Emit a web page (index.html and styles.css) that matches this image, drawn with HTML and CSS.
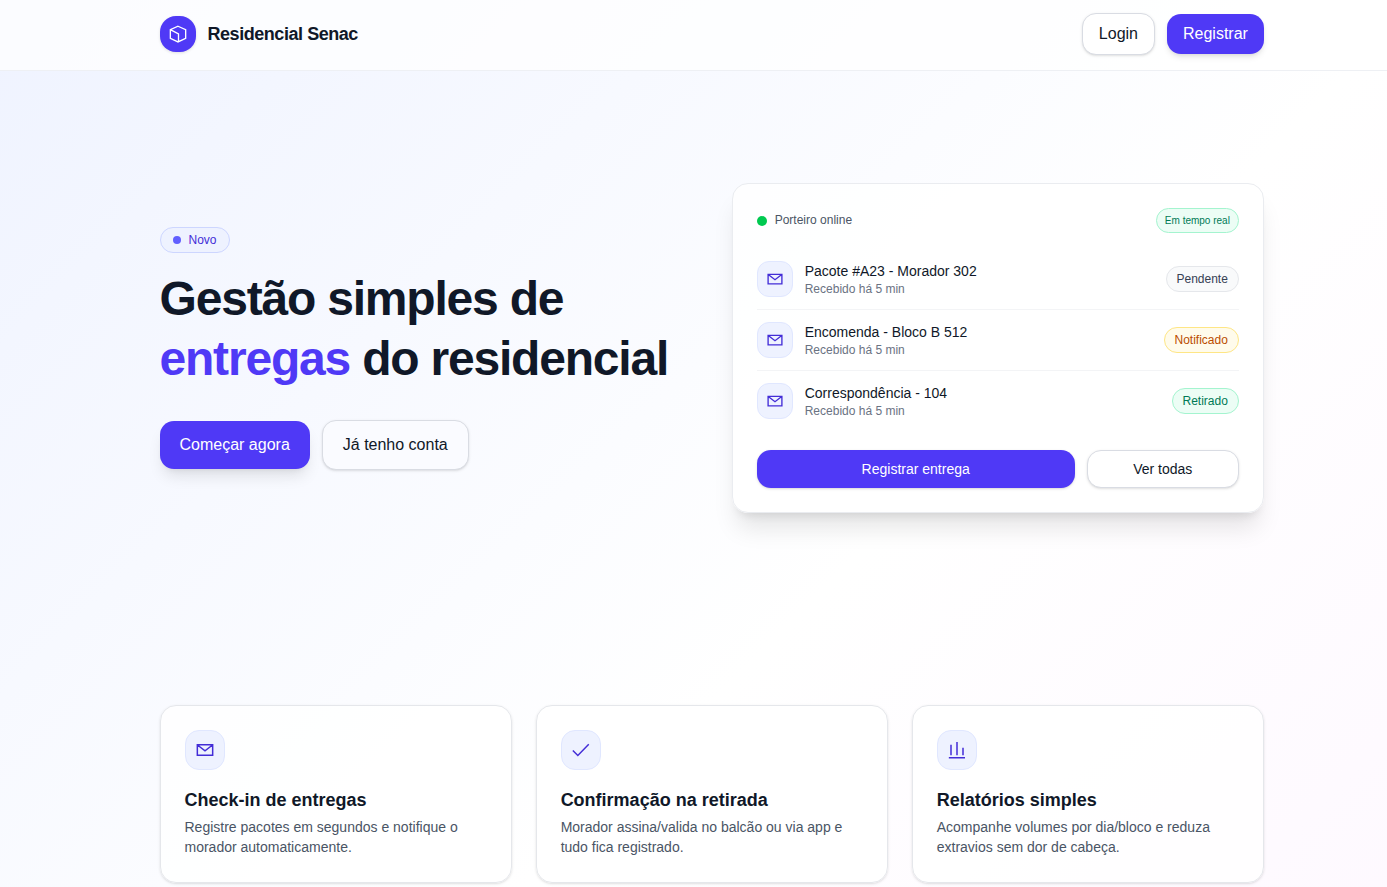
FILE: index.html
```html
<!DOCTYPE html>
<html lang="pt-BR">
<head>
<meta charset="utf-8">
<title>Residencial Senac</title>
<link rel="stylesheet" href="styles.css">
</head>
<body>
<svg width="0" height="0" class="symbols">
  <symbol id="mail" viewBox="0 0 24 24"><path d="M2.8 5.8h18.4v12.6H2.8z M3 6l9 7 9-7"/></symbol>
</svg>
<div class="page">
  <header class="header">
    <div class="container bar">
      <div class="brand">
        <span class="logo"><svg class="icon" viewBox="0 0 24 24"><path d="M12 2.7l9.2 4v10.6L12 21.5l-9.2-4.2V6.7z M2.8 6.7L12.6 11.8v9.6"/></svg></span>
        <span class="name">Residencial Senac</span>
      </div>
      <nav class="nav">
        <a class="btn outline">Login</a>
        <a class="btn primary">Registrar</a>
      </nav>
    </div>
  </header>
  <main>
    <section class="container hero">
      <div class="intro">
        <span class="pill new"><i class="dot"></i>Novo</span>
        <h1>Gestão simples de <span class="accent">entregas</span> do residencial</h1>
        <div class="actions">
          <a class="btn primary large">Começar agora</a>
          <a class="btn outline large clear">Já tenho conta</a>
        </div>
      </div>
      <div class="panel">
        <div class="status">
          <span class="online"><i class="dot"></i>Porteiro online</span>
          <span class="pill green live">Em tempo real</span>
        </div>
        <ul class="list">
          <li><span class="tile"><svg class="icon" viewBox="0 0 24 24"><use href="#mail"/></svg></span>
            <div class="item"><p class="title">Pacote #A23 - Morador 302</p><p class="time">Recebido há 5 min</p></div>
            <span class="pill gray">Pendente</span></li>
          <li><span class="tile"><svg class="icon" viewBox="0 0 24 24"><use href="#mail"/></svg></span>
            <div class="item"><p class="title">Encomenda - Bloco B 512</p><p class="time">Recebido há 5 min</p></div>
            <span class="pill amber">Notificado</span></li>
          <li><span class="tile"><svg class="icon" viewBox="0 0 24 24"><use href="#mail"/></svg></span>
            <div class="item"><p class="title">Correspondência - 104</p><p class="time">Recebido há 5 min</p></div>
            <span class="pill green">Retirado</span></li>
        </ul>
        <div class="panel-actions">
          <a class="btn primary small">Registrar entrega</a>
          <a class="btn outline small">Ver todas</a>
        </div>
      </div>
    </section>
    <section class="container features">
      <article class="card">
        <span class="tile big"><svg class="icon" viewBox="0 0 24 24"><use href="#mail"/></svg></span>
        <h3>Check-in de entregas</h3>
        <p>Registre pacotes em segundos e notifique o morador automaticamente.</p>
      </article>
      <article class="card">
        <span class="tile big"><svg class="icon" viewBox="0 0 24 24"><path d="M2.2 12.5l6 6L21.3 5.2"/></svg></span>
        <h3>Confirmação na retirada</h3>
        <p>Morador assina/valida no balcão ou via app e tudo fica registrado.</p>
      </article>
      <article class="card">
        <span class="tile big"><svg class="icon" viewBox="0 0 24 24"><path d="M2.2 21.3h19.4 M4.8 18.2V5.6 M12 18.2V2.4 M19.2 18.2V9.2"/></svg></span>
        <h3>Relatórios simples</h3>
        <p>Acompanhe volumes por dia/bloco e reduza extravios sem dor de cabeça.</p>
      </article>
    </section>
  </main>
</div>
</body>
</html>
```
FILE: styles.css
```css
* { box-sizing: border-box; margin: 0; padding: 0; }
html { overflow: hidden; }
body { font-family: "Liberation Sans", Arial, sans-serif; color: #101828; overflow: hidden; height: 887px; }
.symbols { display: block; height: 0; }
.page { width: 1423.4px; height: 887px; overflow: hidden; background: linear-gradient(to bottom right, #eff3ff, #fff 50%, #fdf5ff) 0 0 / 1424px 1400px no-repeat; }
.container { width: 1104.4px; margin: 0 auto; }
.header { height: 71px; background: rgba(255,255,255,.75); border-bottom: 1px solid #eef0f4; }
.bar { height: 68px; display: flex; justify-content: space-between; align-items: center; }
.brand, .nav, .actions { display: flex; align-items: center; gap: 12px; }
.logo { width: 36px; height: 36px; border-radius: 16px; background: #4f39f6; color: #fff; display: grid; place-items: center; box-shadow: 0 1px 3px rgba(0,0,0,.12); }
.icon { width: 20px; height: 20px; fill: none; stroke: currentColor; stroke-width: 1.6; }
.name { font-size: 18px; font-weight: 700; letter-spacing: -.45px; }
.btn { display: block; padding: 8px 16px; border-radius: 14px; font-size: 16px; line-height: 24px; text-align: center; white-space: nowrap; }
.primary { background: #4f39f6; color: #fff; box-shadow: 0 1px 3px rgba(0,0,0,.12), 0 1px 2px -1px rgba(0,0,0,.12); }
.outline { background: #fff; border: 1px solid #d9dce3; box-shadow: 0 1px 3px rgba(0,0,0,.1), 0 1px 2px -1px rgba(0,0,0,.1); }
.nav .primary { box-shadow: 0 4px 6px -1px rgba(0,0,0,.1), 0 2px 4px -2px rgba(0,0,0,.1); }
.large { padding: 12px 20px; }
.actions .primary { box-shadow: 0 10px 15px -3px rgba(0,0,0,.1), 0 4px 6px -4px rgba(0,0,0,.1); }
.clear { background: #fafbff; }
.hero { padding-top: 112px; height: 634px; display: grid; grid-template-columns: 1fr 1fr; gap: 40px; align-items: start; }
.intro { padding-top: 43.5px; }
.pill { display: inline-flex; align-items: center; border: 1px solid; border-radius: 20px; font-size: 12px; line-height: 16px; padding: 4px 10px; white-space: nowrap; }
.new { gap: 8px; padding: 4px 12px; color: #432dd7; background: #eef2ff; border-color: #cdd6ff; }
.dot { width: 8px; height: 8px; border-radius: 50%; background: #615fff; }
h1 { margin-top: 16px; font-size: 48px; line-height: 60px; letter-spacing: -1.2px; }
.accent { color: #4f39f6; }
.actions { margin-top: 31.5px; }
.panel { border: 1px solid #eaecf0; border-radius: 16px; padding: 24px; height: 330px; background: rgba(255,255,255,.8); box-shadow: 0 20px 25px -5px rgba(0,0,0,.1), 0 8px 10px -6px rgba(0,0,0,.1); }
.status { display: flex; justify-content: space-between; align-items: center; height: 25px; margin-bottom: 16px; }
.online { display: flex; align-items: center; gap: 8px; font-size: 12px; line-height: 15px; color: #4a5565; }
.online .dot { width: 10px; height: 10px; background: #00c950; }
.live { font-size: 10px; padding: 3.5px 8px; }
.green { background: #ecfdf5; border-color: #a4f4cf; color: #007a55; }
.gray { background: #f9fafb; border-color: #e5e7eb; color: #364153; }
.amber { background: #fffbeb; border-color: #fee685; color: #bb4d00; }
.list { list-style: none; }
.list li { display: flex; align-items: center; gap: 12px; padding: 12px 0 11.75px; }
.list li + li { border-top: 1px solid #f3f4f6; }
.tile { flex: none; width: 36px; height: 36px; border-radius: 12px; border: 1px solid #e0e7ff; background: #eef2ff; color: #432dd7; display: grid; place-items: center; }
.tile .icon { width: 18px; height: 18px; stroke-width: 1.8; }
.item { flex: 1; }
.title { font-size: 14px; line-height: 20px; }
.time { font-size: 12px; line-height: 16px; color: #6a7282; }
.panel-actions { display: grid; grid-template-columns: 318px 1fr; gap: 12px; margin-top: 20px; }
.small { font-size: 14px; line-height: 20px; padding: 9px 12px; }
.outline.small { padding: 8px 12px; }
.features { display: grid; grid-template-columns: repeat(3, 1fr); gap: 24px; }
.card { height: 178px; border: 1px solid #e5e7eb; border-radius: 16px; padding: 24px; background: rgba(255,255,255,.8); box-shadow: 0 1px 3px rgba(0,0,0,.1), 0 1px 2px -1px rgba(0,0,0,.1); }
.big { width: 40px; height: 40px; border-radius: 14px; }
.big .icon { width: 20px; height: 20px; }
h3 { margin-top: 16px; font-size: 18px; line-height: 28px; }
.card p { margin-top: 3px; font-size: 14px; line-height: 20px; color: #4a5565; }
```
